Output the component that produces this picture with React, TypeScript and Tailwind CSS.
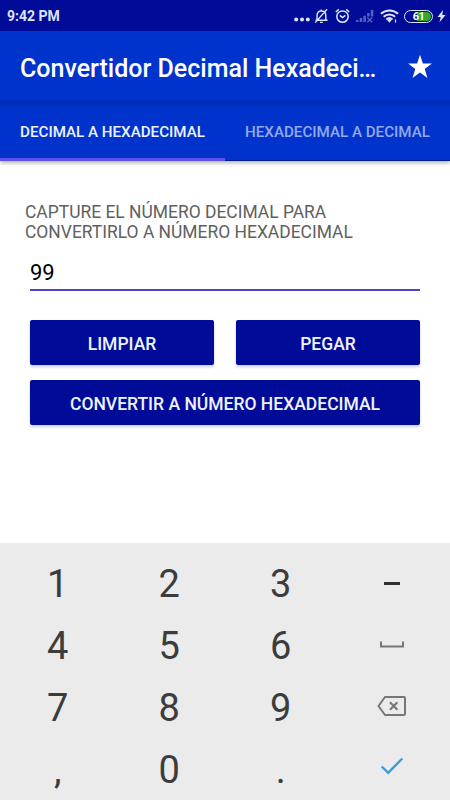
import { type ReactNode } from 'react'

function StatusBar() {
  return (
    <div className="flex h-[31px] items-center justify-between bg-[#000c98] pl-[7px] pr-1 pt-px text-[#dfe3fb]">
      <span className="text-[14px] font-bold leading-none">9:42 PM</span>
      <div className="flex h-full items-center">
        {/* More notifications */}
        <svg className="mr-1 h-4 w-4" viewBox="0 0 16 16" fill="currentColor">
          <circle cx="2.2" cy="11.5" r="2" />
          <circle cx="8" cy="11.5" r="2" />
          <circle cx="13.8" cy="11.5" r="2" />
        </svg>
        {/* Silent */}
        <svg className="mr-[6px] h-4 w-[15px]" viewBox="0 0 15 16" fill="none" stroke="currentColor" strokeWidth="1.4">
          <path d="M1.500 12.300h12M3 12V7.500C3 4.700 4.600 3 7.300 3s4.500 1.700 4.500 4.500V12M7.300 3V1.500M6 14.400h2.800M1.200 14.600 13 1.200" />
        </svg>
        {/* Alarm */}
        <svg className="mr-[6px] h-4 w-[15px]" viewBox="0 0 15 16" fill="none" stroke="currentColor" strokeWidth="1.5">
          <circle cx="7.5" cy="8.6" r="5.7" />
          <path d="m.8 4 3-2.600M14.200 4l-3-2.600M4.800 7.400l2.700 2.200 2.800-2.200" />
        </svg>
        {/* Signal */}
        <svg className="mr-[6px] h-4 w-[18px] text-[#565fc2]" viewBox="0 0 18 16" fill="currentColor">
          <path d="M0 12h2.500v2H0zM3.700 10h2.500v4H3.700zM7.400 7.700h2.500V14H7.400zM11.100 5h2.500v3.500h-2.500zM14.800 2h2.500v6.500h-2.500z" />
          <path d="m11.300 9.500 5 4.700m0-4.700-5 4.700" stroke="currentColor" strokeWidth="1.4" />
        </svg>
        {/* Wifi */}
        <svg className="mr-[5px] h-4 w-[19px]" viewBox="0 0 19 16" fill="none" stroke="currentColor" strokeWidth="2">
          <path d="M1 5.800c4.700-4.400 12.300-4.400 17 0M3.700 8.700c3.200-3 8.200-3 11.400 0M6.300 11.400c1.800-1.700 4.400-1.700 6.200 0" />
          <path d="m7 11.800 2.400 2.900 2.400-2.900c-1.300-1.200-3.500-1.200-4.800 0z" fill="currentColor" stroke="none" />
          <path d="M15.500 11.400v3.200" strokeWidth="1.200" />
        </svg>
        {/* Battery */}
        <div className="mr-1 flex h-[13px] w-[29px] rounded-full border-[1.5px] border-[#dfe3fb] p-px">
          <div className="flex w-full items-center justify-center rounded-full bg-[linear-gradient(90deg,#000c98_0_42%,#35a82c_42%)] text-[11px] font-bold leading-none tracking-[-0.5px] text-white">
            61
          </div>
        </div>
        <svg className="h-4 w-[9px]" viewBox="0 0 9 16" fill="currentColor">
          <path d="M6 2 .500 9h3.200L2.500 14.300 8.600 7H5.300z" />
        </svg>
      </div>
    </div>
  )
}

function Header() {
  return (
    <header className="h-[70px] bg-[#0033cc]">
      <div className="flex h-full items-center justify-between pl-5 pr-[17px] pt-[3px]">
        <h1 className="whitespace-nowrap pt-px text-[25px] font-medium leading-none text-white">Convertidor Decimal Hexadeci…</h1>
        <svg className="mb-px h-[26px] w-[26px]" viewBox="0 0 26 26" fill="#fff">
          <path d="m13 .8 2.900 8.600h9L17.700 15l2.800 8.900-7.500-5.400-7.500 5.400L8.300 15 1.100 9.400h9z" />
        </svg>
      </div>
    </header>
  )
}

function Tabs() {
  return (
    <nav className="flex h-[60px] bg-[#0033cc] bg-[linear-gradient(180deg,#0029a8_0,#0033cc_5px)] text-[15.150px] font-medium shadow-[0_2px_4px_rgba(0,0,0,0.3)]">
      <div className="flex flex-1 items-center justify-center whitespace-nowrap border-b-[3px] border-[#5b50ea] pt-[5px] text-[#eef2ff]">
        DECIMAL A HEXADECIMAL
      </div>
      <div className="flex flex-1 items-center justify-center whitespace-nowrap border-b border-[#001c98] pt-[3px] text-[#94a9e9]">
        HEXADECIMAL A DECIMAL
      </div>
    </nav>
  )
}

function Button({ children }: { children: ReactNode }) {
  return (
    <button className="h-[45px] w-full whitespace-nowrap rounded-[2px] bg-[#000c98] pt-[3px] text-[17.5px] font-medium text-[#f0f2ff] shadow-[0_2px_3px_rgba(0,0,90,0.2)]">
      {children}
    </button>
  )
}

function SpaceIcon() {
  return (
    <svg className="mb-[3px] h-8 w-8" viewBox="0 0 32 32" fill="none" stroke="#777" strokeWidth="2">
      <path d="M5 12.500v5h22v-5" />
    </svg>
  )
}

function BackspaceIcon() {
  return (
    <svg className="mb-[5px] h-8 w-8" viewBox="0 0 32 32" fill="none" stroke="#777" strokeWidth="2">
      <path d="M9 7h19a1 1 0 0 1 1 1v16a1 1 0 0 1-1 1H9L2.500 16z" strokeLinejoin="round" />
      <path d="m14 12.300 7.400 7.400m0-7.400-7.400 7.400" strokeWidth="2.200" />
    </svg>
  )
}

function CheckIcon() {
  return (
    <svg className="mb-[4px] h-8 w-8" viewBox="0 0 32 32" fill="none" stroke="#379cd8" strokeWidth="2.400">
      <path d="m5.700 14.500 6.500 6.300L26.300 6.500" />
    </svg>
  )
}

const keys: ReactNode[] = [
  '1', '2', '3', <span className="mb-[2px] h-[3px] w-4 bg-[#303030]" />,
  '4', '5', '6', <SpaceIcon />,
  '7', '8', '9', <BackspaceIcon />,
  ',', '0', '.', <CheckIcon />,
]

function Keypad() {
  return (
    <div className="grid h-[257px] auto-rows-[62px] grid-cols-4 overflow-hidden bg-[#ebebeb] px-[2px] pt-[10px] text-[38px] leading-none text-[#3c3c3c]">
      {keys.map((key, i) => (
        <div key={i} className="flex items-center justify-center">
          {key}
        </div>
      ))}
    </div>
  )
}

export default function App() {
  return (
    <div className="flex h-[800px] w-[450px] flex-col overflow-hidden bg-white font-[Roboto,sans-serif]">
      <StatusBar />
      <Header />
      <Tabs />

      <main className="flex-1 px-[30px] pt-[41px]">
        <p className="-ml-[5px] whitespace-nowrap text-[17.440px] leading-[20px] text-[#606060]">
          CAPTURE EL NÚMERO DECIMAL PARA
          <br />
          CONVERTIRLO A NÚMERO HEXADECIMAL
        </p>
        <div className="mt-[13px] flex h-[36px] items-center border-b-2 border-[#4a48bd] text-[22px] text-black">99</div>

        <div className="mt-[29px] grid grid-cols-[184px_184px] justify-between gap-y-[15px]">
          <Button>LIMPIAR</Button>
          <Button>PEGAR</Button>
          <div className="col-span-2">
            <Button>CONVERTIR A NÚMERO HEXADECIMAL</Button>
          </div>
        </div>
      </main>

      <Keypad />
    </div>
  )
}
